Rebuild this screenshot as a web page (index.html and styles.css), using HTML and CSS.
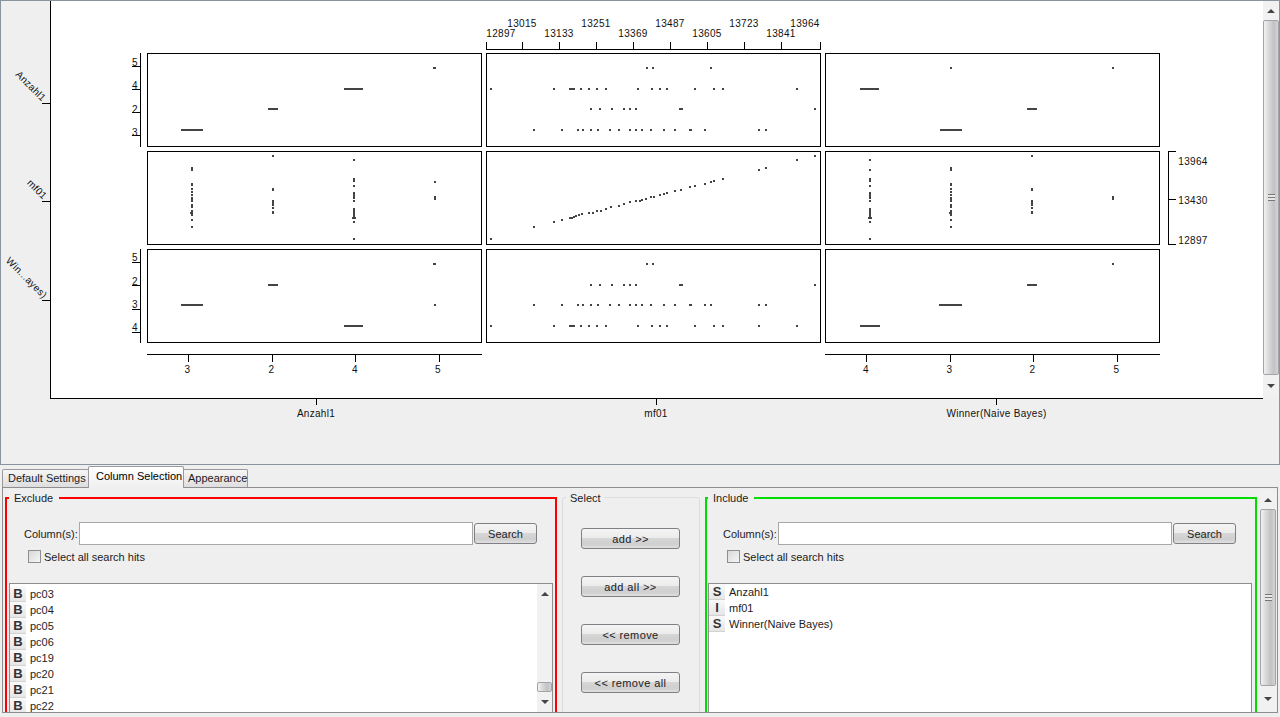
FILE: index.html
```html
<!DOCTYPE html>
<html lang="en">
<head>
    <meta charset="UTF-8">
    <title>Column Selection</title>
    <link rel="stylesheet" href="styles.css">
</head>
<body>

    <!-- scatter matrix -->
    <div class="top-pane">
        <svg class="plot" id="plot" viewBox="1 1 1262 463" width="1262" height="463">
            <rect class="canvas" x="51" y="1" width="1212" height="397"></rect>

            <path class="line" d="M50.5 0V398M42 103.5H50M42 201.5H50M42 300.5H50M50 398.5H1263M316.5 398V405M656.5 398V405M996.5 398V405"></path>

            <!-- panels -->
            <rect class="frame" x="147.5" y="53.5" width="334" height="93"></rect>
            <rect class="frame" x="486.5" y="53.5" width="334" height="93"></rect>
            <rect class="frame" x="825.5" y="53.5" width="334" height="93"></rect>
            <rect class="frame" x="147.5" y="151.5" width="334" height="93"></rect>
            <rect class="frame" x="486.5" y="151.5" width="334" height="93"></rect>
            <rect class="frame" x="825.5" y="151.5" width="334" height="93"></rect>
            <rect class="frame" x="147.5" y="249.5" width="334" height="93"></rect>
            <rect class="frame" x="486.5" y="249.5" width="334" height="93"></rect>
            <rect class="frame" x="825.5" y="249.5" width="334" height="93"></rect>

            <!-- axes -->
            <path class="line" d="M140.5 53V147M132 66.5H140M132 89.5H140M132 112.5H140M132 135.5H140"></path>
            <path class="line" d="M140.5 249V343M132 262.5H140M132 285.5H140M132 309.5H140M132 332.5H140"></path>
            <path class="line" d="M147 354.5H482M188.5 354V362M272.5 354V362M355.5 354V362M439.5 354V362"></path>
            <path class="line" d="M825 354.5H1160M866.5 354V362M950.5 354V362M1033.5 354V362M1117.5 354V362"></path>
            <path class="line" d="M486 49.5H821M486.5 42V49M522.5 42V49M559.5 42V49M596.5 42V49M633.5 42V49M670.5 42V49M707.5 42V49M744.5 42V49M781.5 42V49M820.5 42V49"></path>
            <path class="line" d="M1176 151.5H1168.5V244.5H1176M1168 199.5H1176"></path>

            <g class="tick-label">
                <text x="135" y="66">5</text>
                <text x="135" y="89">4</text>
                <text x="135" y="113">2</text>
                <text x="135" y="136">3</text>
                <text x="135" y="261">5</text>
                <text x="135" y="285">2</text>
                <text x="135" y="308">3</text>
                <text x="135" y="331">4</text>

                <text x="187.5" y="373">3</text>
                <text x="271.5" y="373">2</text>
                <text x="355" y="373">4</text>
                <text x="438" y="373">5</text>
                <text x="866" y="373">4</text>
                <text x="949.5" y="373">3</text>
                <text x="1032.5" y="373">2</text>
                <text x="1116.5" y="373">5</text>

                <text x="522" y="27">13015</text>
                <text x="596" y="27">13251</text>
                <text x="670" y="27">13487</text>
                <text x="744" y="27">13723</text>
                <text x="805" y="27">13964</text>
                <text x="501" y="37">12897</text>
                <text x="559" y="37">13133</text>
                <text x="633" y="37">13369</text>
                <text x="707" y="37">13605</text>
                <text x="781" y="37">13841</text>

                <text x="1193" y="165">13964</text>
                <text x="1193" y="204">13430</text>
                <text x="1193" y="244">12897</text>

                <text x="316" y="417">Anzahl1</text>
                <text x="656" y="417">mf01</text>
                <text x="996.5" y="417">Winner(Naive Bayes)</text>
            </g>

            <g class="slant-label">
                <text x="42" y="102" transform="rotate(45 42 102)">Anzahl1</text>
                <text x="43" y="200" transform="rotate(45 43 200)">mf01</text>
                <text x="43" y="299" transform="rotate(45 43 299)">Win...ayes)</text>
            </g>
        </svg>

        <div class="scrollbar scrollbar-main">
            <div class="scroll-btn"><span class="arrow-up"></span></div>
            <div class="scroll-thumb"><span class="grip"></span></div>
            <div class="scroll-btn"><span class="arrow-down"></span></div>
        </div>
    </div>

    <!-- tabs -->
    <div class="tabs">
        <div class="tab">Default Settings</div>
        <div class="tab tab-active">Column Selection</div>
        <div class="tab tab-last">Appearance</div>
    </div>

    <div class="tab-panel">
        <div class="group group-exclude">
            <span class="legend">Exclude</span>
            <div class="search-row">
                <label class="search-label">Column(s):</label>
                <input type="text" class="search-input">
                <button class="btn btn-search">Search</button>
            </div>
            <div class="check-row">
                <span class="checkbox"></span>
                <span>Select all search hits</span>
            </div>
            <div class="list">
                <div class="list-items list-scrolled">
                    <div class="list-row"><span class="type-icon">B</span>pc03</div>
                    <div class="list-row"><span class="type-icon">B</span>pc04</div>
                    <div class="list-row"><span class="type-icon">B</span>pc05</div>
                    <div class="list-row"><span class="type-icon">B</span>pc06</div>
                    <div class="list-row"><span class="type-icon">B</span>pc19</div>
                    <div class="list-row"><span class="type-icon">B</span>pc20</div>
                    <div class="list-row"><span class="type-icon">B</span>pc21</div>
                    <div class="list-row"><span class="type-icon">B</span>pc22</div>
                </div>
                <div class="scrollbar scrollbar-list">
                    <div class="scroll-btn"><span class="arrow-up"></span></div>
                    <div class="scroll-space"></div>
                    <div class="scroll-thumb scroll-thumb-small"></div>
                    <div class="scroll-btn"><span class="arrow-down"></span></div>
                </div>
            </div>
        </div>

        <div class="group-select">
            <span class="legend">Select</span>
            <button class="btn btn-move">add &gt;&gt;</button>
            <button class="btn btn-move">add all &gt;&gt;</button>
            <button class="btn btn-move">&lt;&lt; remove</button>
            <button class="btn btn-move">&lt;&lt; remove all</button>
        </div>

        <div class="group group-include">
            <span class="legend">Include</span>
            <div class="search-row">
                <label class="search-label">Column(s):</label>
                <input type="text" class="search-input">
                <button class="btn btn-search">Search</button>
            </div>
            <div class="check-row">
                <span class="checkbox"></span>
                <span>Select all search hits</span>
            </div>
            <div class="list">
                <div class="list-items">
                    <div class="list-row"><span class="type-icon">S</span>Anzahl1</div>
                    <div class="list-row"><span class="type-icon">I</span>mf01</div>
                    <div class="list-row"><span class="type-icon">S</span>Winner(Naive Bayes)</div>
                </div>
            </div>
        </div>

        <div class="scrollbar scrollbar-panel">
            <div class="scroll-btn"><span class="arrow-up"></span></div>
            <div class="scroll-thumb"><span class="grip"></span></div>
            <div class="scroll-btn"><span class="arrow-down"></span></div>
        </div>
    </div>

    <script src="plot.js"></script>
</body>
</html>
```

FILE: styles.css
```css
/* page */
body {
    margin: 0;
    height: 717px;
    overflow: hidden;
    background-color: #efefef;
    font-family: "Liberation Sans", Arial, sans-serif;
    font-size: 11px;
    color: #1c1c24;
}

/* top pane with the plot */
.top-pane {
    display: flex;
    align-items: flex-start;
    height: 465px;
    box-sizing: border-box;
    border: 1px solid #8a94a0;
}

.plot {
    display: block;
    flex: none;
}

.canvas {
    fill: #fff;
}

.line {
    fill: none;
    stroke: #000;
    stroke-width: 1;
    shape-rendering: crispEdges;
}

.frame {
    fill: none;
    stroke: #000;
    stroke-width: 1;
    shape-rendering: crispEdges;
}

.point {
    fill: #444;
    shape-rendering: crispEdges;
}

.tick-label text {
    font-size: 10px;
    letter-spacing: 0.3px;
    text-anchor: middle;
    fill: #111;
}

.slant-label text {
    font-size: 10px;
    letter-spacing: 0.3px;
    text-anchor: end;
    fill: #111;
}

/* scrollbars */
.scrollbar {
    display: flex;
    flex-direction: column;
    flex: none;
    width: 16px;
    background-color: #f1f1f1;
}

.scrollbar-main {
    height: 396px;
}

.scrollbar-main .scroll-btn:first-child {
    height: 19px;
}

.scrollbar-main .scroll-btn:last-child {
    height: 22px;
}

.scrollbar-main .scroll-thumb {
    flex: 1;
}

.scroll-btn {
    display: flex;
    align-items: center;
    justify-content: center;
    flex: none;
    height: 20px;
}

.arrow-up {
    width: 0;
    height: 0;
    border-left: 4px solid transparent;
    border-right: 4px solid transparent;
    border-bottom: 4px solid #444;
}

.arrow-down {
    width: 0;
    height: 0;
    border-left: 4px solid transparent;
    border-right: 4px solid transparent;
    border-top: 4px solid #444;
}

.scroll-thumb {
    display: flex;
    align-items: center;
    justify-content: center;
    box-sizing: border-box;
    border: 1px solid #a4a4a8;
    border-radius: 2px;
    background: linear-gradient(90deg, #f2f2f2, #dcdcdc 30%, #c2c2c4 70%, #d4d4d6);
}

.grip {
    width: 7px;
    height: 7px;
    background: repeating-linear-gradient(180deg, #777 0, #777 1px, #e8e8e8 1px, #e8e8e8 3px);
}

/* tabs */
.tabs {
    display: flex;
    align-items: flex-end;
    height: 22px;
    padding-left: 2px;
}

.tab {
    position: relative;
    box-sizing: border-box;
    height: 18px;
    width: 87px;
    padding: 2px 0 0 5px;
    border: 1px solid #9a9a9e;
    border-bottom: none;
    border-radius: 2px 2px 0 0;
    background: linear-gradient(180deg, #f6f6f6, #dedede);
    white-space: nowrap;
}

.tab-active {
    z-index: 1;
    height: 22px;
    width: 96px;
    margin: 0 -1px -1px -1px;
    padding: 3px 0 0 7px;
    background: linear-gradient(180deg, #fff, #efefef);
    color: #000;
}

.tab-last {
    width: 65px;
    padding-left: 4px;
}

/* panel under the tabs */
.tab-panel {
    display: flex;
    align-items: flex-start;
    gap: 5px;
    width: 1276px;
    height: 226px;
    box-sizing: border-box;
    margin-left: 2px;
    padding: 9px 0 0 2px;
    border: 1px solid #8e8e92;
    overflow: hidden;
}

.group {
    position: relative;
    flex: none;
    box-sizing: border-box;
    width: 552px;
    height: 240px;
}

.group-exclude {
    border: 2px solid #f00;
    padding-left: 1px;
}

.group-include {
    border: 2px solid #0d0;
}

.group-select {
    position: relative;
    display: flex;
    flex-direction: column;
    gap: 27px;
    flex: none;
    box-sizing: border-box;
    width: 138px;
    height: 240px;
    padding: 30px 0 0 18px;
    border: 1px solid #dcdcdc;
    border-radius: 3px;
}

.legend {
    position: absolute;
    top: -9px;
    left: 2px;
    padding: 0 6px 0 5px;
    line-height: 16px;
    background-color: #efefef;
}

.group-include .legend {
    left: 1px;
}

.group-select .legend {
    top: -8px;
    left: 3px;
    padding: 0 4px;
}

/* search line */
.search-row {
    display: flex;
    align-items: center;
    height: 23px;
    margin: 23px 0 0 16px;
}

.search-label {
    width: 55px;
    flex: none;
}

.search-input {
    width: 394px;
    height: 23px;
    box-sizing: border-box;
    margin: 0;
    padding: 0 3px;
    border: 1px solid #a8a8a8;
    background-color: #fff;
    outline: none;
}

.btn {
    box-sizing: border-box;
    height: 21px;
    padding: 0;
    border: 1px solid #7f7f85;
    border-radius: 3px;
    background: linear-gradient(180deg, #f4f4f4, #ececec 45%, #d6d6d6 50%, #cfcfcf 80%, #e0e0e0);
    font-family: inherit;
    font-size: 11px;
    color: #1c1c24;
    cursor: pointer;
}

.btn-search {
    flex: none;
    width: 63px;
    margin-left: 1px;
}

.btn-move {
    flex: none;
    width: 99px;
    letter-spacing: 0.4px;
}

.check-row {
    display: flex;
    align-items: center;
    gap: 3px;
    margin: 5px 0 0 20px;
    height: 13px;
}

.checkbox {
    width: 13px;
    height: 13px;
    box-sizing: border-box;
    border: 1px solid #8e8e92;
    background: linear-gradient(135deg, #d8d8d8, #f6f6f6);
}

/* column lists */
.list {
    display: flex;
    width: 544px;
    height: 140px;
    box-sizing: border-box;
    margin: 20px 0 0 1px;
    border: 1px solid #8e8e92;
    background-color: #fff;
    overflow: hidden;
}

.list-items {
    flex: 1;
}

.list-scrolled {
    padding-top: 2px;
}

.list-row {
    display: flex;
    align-items: center;
    height: 16px;
    line-height: 16px;
}

.type-icon {
    flex: none;
    width: 16px;
    height: 16px;
    margin-right: 4px;
    background: linear-gradient(180deg, #fafafa, #e6e6e6);
    border-bottom: 1px solid #d2d2d2;
    box-sizing: border-box;
    text-align: center;
    font-size: 13px;
    font-weight: bold;
    line-height: 15px;
    color: #333;
}

.scrollbar-list {
    height: 128px;
    width: 15px;
}

.scroll-space {
    flex: 1;
}

.scroll-thumb-small {
    flex: none;
    height: 10px;
}

.scrollbar-panel {
    margin: -7px 0 0 -2px;
    height: 222px;
}

.scrollbar-panel .scroll-btn:first-child {
    height: 19px;
}

.scrollbar-panel .scroll-btn:last-child {
    height: 26px;
}

.scrollbar-panel .scroll-thumb {
    flex: 1;
}
```

FILE: plot.js
```js
// points of the scatter matrix, measured in page pixels
const svg = document.getElementById('plot');

function box(x, y, w, h) {
    const r = document.createElementNS('http://www.w3.org/2000/svg', 'rect');
    r.setAttribute('class', 'point');
    r.setAttribute('x', x);
    r.setAttribute('y', y);
    r.setAttribute('width', w);
    r.setAttribute('height', h);
    svg.appendChild(r);
}

function dot(cx, cy) {
    box(Math.round(cx) - 1, Math.round(cy) - 1, 2, 2);
}

// a horizontal run of points: [from, to]
function bar(from, to, cy) {
    box(from, Math.round(cy) - 1, to - from, 2);
}

// middle column, one row of points
function row(cy, xs, bars) {
    xs.forEach(function (x) { dot(480 + x / 3, cy); });
    (bars || []).forEach(function (b) { bar(480 + b[0] / 3, 480 + b[1] / 3, cy); });
}

// a vertical column of points, y values read as 3x offsets from the top
function strip(cx, segments) {
    segments.forEach(function (s) {
        box(cx - 1, Math.round(s[0] / 3), 2, Math.max(2, Math.round((s[1] - s[0]) / 3)));
    });
}

const stripA = [[501, 513], [549, 558], [564, 567], [573, 576], [582, 585], [591, 606], [612, 624], [630, 648], [657, 663], [678, 684]];
const stripB = [[464, 470], [564, 573], [600, 618], [621, 624], [633, 642]];
const stripC = [[477, 483], [534, 546], [555, 561], [576, 597], [600, 606], [624, 657], [663, 669], [714, 720]];
const stripD = [[588, 600]];

// nominal against nominal
const outer = [
    { cy: 129.5, ay: 305 },
    { cy: 108.5, ay: 285 },
    { cy: 89, ay: 326 }
];
bar(181, 203, outer[0].cy); bar(181, 203, outer[0].ay);
bar(268, 278, outer[1].cy); bar(268, 278, outer[1].ay);
bar(344, 363, outer[2].cy); bar(344, 363, outer[2].ay);
bar(433, 436, 68); bar(433, 436, 264);
dot(435, 305);

bar(860, 879, 89); dot(951, 68); dot(1113, 68);
bar(1027, 1037, 108.5); bar(940, 962, 129.5);
dot(1113, 264); bar(1027, 1037, 285); bar(939, 962, 305); bar(860, 880, 326);

// nominal against mf01
strip(192, stripA);
strip(273, stripB);
strip(354, stripC);
box(352, 217, 4, 2);
box(190, 212, 1, 2);
dot(435, 182);
strip(435, stripD);

strip(870, stripC.concat([[507, 513]]));
box(868, 217, 4, 2);
strip(951, stripA);
box(949, 212, 1, 2);
strip(1032, stripB);
strip(1113, stripD);

// mf01 against nominal, top row
row(68, [501, 519, 693]);
row(89, [33, 222, 303, 327, 351, 378, 474, 516, 540, 561, 645, 702, 729, 951], [[267, 285]]);
row(108.5, [333, 360, 396, 432, 450, 468, 1005], [[597, 609]]);
row(129.5, [162, 246, 294, 309, 333, 354, 390, 417, 450, 468, 486, 513, 552, 585, 675, 837, 858], [[627, 636]]);

// bottom row
row(264, [501, 519]);
row(285, [333, 360, 396, 432, 450, 468, 1005], [[597, 609]]);
row(305, [162, 246, 294, 309, 333, 354, 390, 417, 450, 468, 486, 513, 552, 585, 675, 693, 837, 858], [[627, 636]]);
row(326, [33, 222, 303, 327, 351, 378, 474, 516, 540, 561, 645, 702, 729, 837, 951], [[267, 285]]);

// mf01 against itself
[[33, 717], [162, 681], [222, 666], [246, 660], [276, 654], [270, 654], [282, 652], [288, 648], [297, 645], [306, 643],
 [327, 639], [339, 639], [351, 633], [363, 633], [378, 627], [393, 622], [417, 617], [432, 611], [450, 606], [468, 603],
 [480, 603], [486, 600], [498, 597], [513, 591], [522, 591], [540, 585], [552, 582], [561, 578], [585, 573], [603, 569],
 [630, 561], [645, 558], [675, 551], [693, 546], [702, 543], [729, 537], [837, 510], [858, 504], [951, 480], [1005, 468]
].forEach(function (p) {
    dot(480 + p[0] / 3, p[1] / 3);
});
```
